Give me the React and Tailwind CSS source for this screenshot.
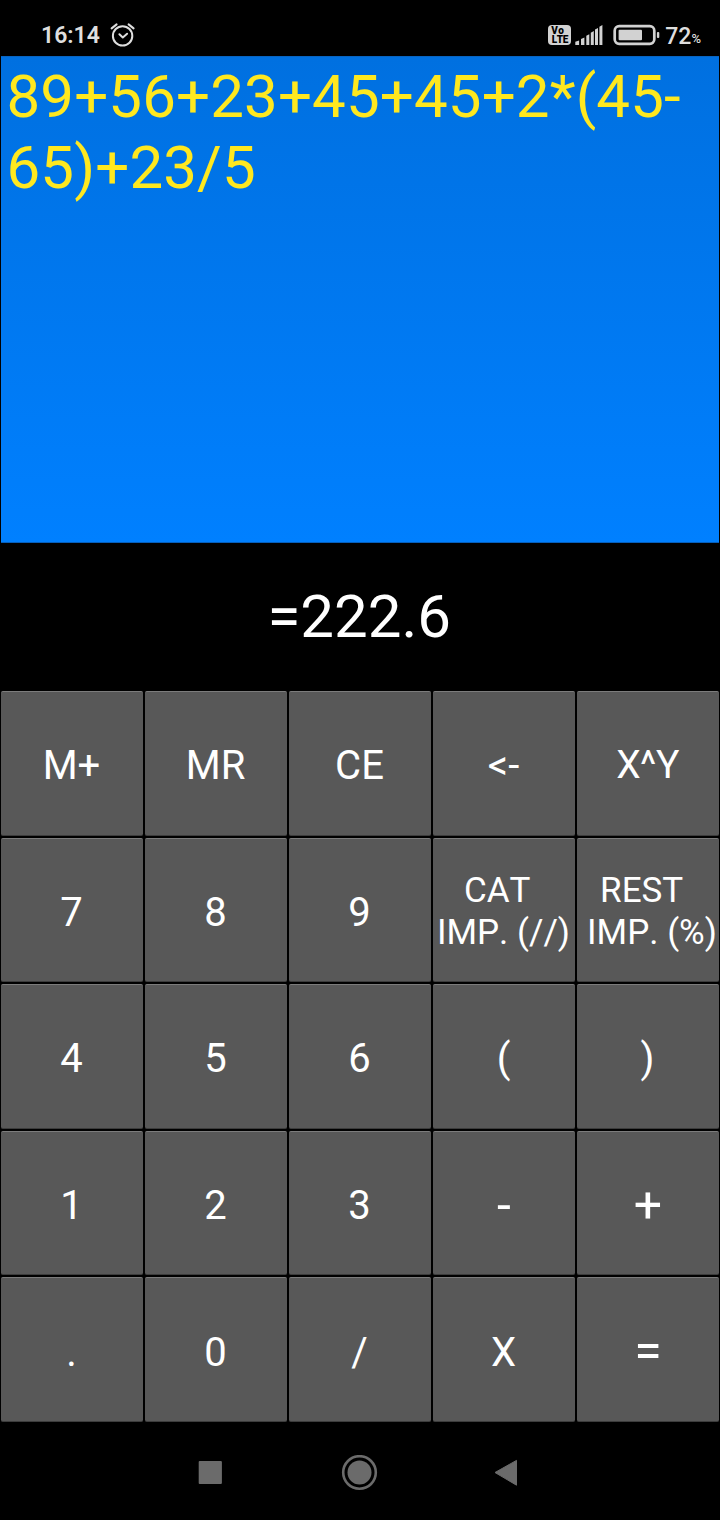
const keys = [
  ["M+"], ["MR"], ["CE"], ["<-"], ["X^Y", "text-[39px] tracking-[-0.5px] pt-1 pr-px"],
  ["7"], ["8"], ["9"], ["CAT", "cat"], ["REST", "rest"],
  ["4"], ["5"], ["6"], ["("], [")"],
  ["1"], ["2"], ["3"], ["-", "text-[50px] pt-1"], ["+", "text-[50px] pt-1"],
  ["."], ["0"], ["/"], ["X"], ["=", "text-[50px] pt-1"],
];

function StatusBar() {
  return (
    <header className="flex h-14 shrink-0 items-center pt-[14px] text-[#dedede]">
      <span className="ml-[41px] w-[69px] text-[23px] leading-none font-semibold">16:14</span>
      <svg width="26" height="26" viewBox="0 0 26 26" fill="none" stroke="#dedede" strokeWidth="2" strokeLinecap="round" strokeLinejoin="round">
        <circle cx="12.6" cy="13.9" r="9.7" />
        <path d="M9.4 12.2l3.4 3.2 4.3-3.7M1.6 6.4l5-4M23.6 6.4l-5-4" />
      </svg>
      <div className="ml-auto flex items-center pr-[19px]">
        <div className="flex h-5 w-[23px] flex-col items-center justify-center rounded-[4px] bg-[#d2d2d2] text-[10px] font-black text-black">
          <span className="h-[9px] w-[17px] leading-[9px] tracking-[0.3px]">Vo</span>
          <span className="h-[9px] leading-[9px] tracking-[-0.4px]">LTE</span>
        </div>
        <svg className="ml-1" width="28" height="20" viewBox="0 0 28 20" fill="#d2d2d2">
          <path d="M.3 20v-3.3l3.8-1.2V20zM6 20v-6l3.4-1.6V20zM11.3 20V10.8l3-1.6V20zM15.8 20V7.8l3-1.7V20zM20 20V4.6l3-1.6V20zM24.4 20V1.7l3-1.7v20z" />
        </svg>
        <svg className="ml-[10px]" width="47" height="22" viewBox="0 0 47 22" fill="none">
          <rect x="1.7" y="2.2" width="39.6" height="17.6" rx="4.5" stroke="#d2d2d2" strokeWidth="2.7" />
          <rect x="5.6" y="5.7" width="23.4" height="10.6" rx="1" fill="#d2d2d2" />
          <rect x="43.9" y="8" width="2.4" height="6" rx="1" fill="#d2d2d2" />
        </svg>
        <span className="mt-0.5 ml-[5px] text-[23px] leading-none font-medium">72</span>
        <span className="mt-[6px] text-[13px] leading-none font-medium">%</span>
      </div>
    </header>
  );
}

function TwoLineLabel({ label, kind }) {
  return (
    <span className="flex flex-col text-[35px] leading-[42px] whitespace-pre">
      <span className={kind === "cat" ? "pl-[27px] text-left" : "pl-[13px] text-left"}>{label}</span>
      <span className="text-left">{kind === "cat" ? "IMP. (//)" : "IMP. (%)"}</span>
    </span>
  );
}

function Key({ label, kind }) {
  const twoLine = kind === "cat" || kind === "rest";
  const text = twoLine ? (kind === "cat" ? "pt-1 pr-px" : "pt-1 pl-[8px]") : kind || "text-[40px] pt-1.5 pr-px";
  return (
    <button className="p-px">
      <span className={"flex h-full items-center justify-center overflow-hidden rounded-[2px] border-t border-b border-t-[#7c7c7c] border-b-[#3c3c3c] bg-[#585858] " + text}>
        {twoLine ? <TwoLineLabel label={label} kind={kind} /> : label}
      </span>
    </button>
  );
}

export default function App() {
  return (
    <div className="flex h-[1520px] w-[720px] flex-col overflow-hidden bg-black font-[Roboto,sans-serif] text-white [font-kerning:none]">
      <StatusBar />
      <section className="mx-px h-[487px] shrink-0 border-t border-b border-t-[#0964c0] border-b-[#075fbb] bg-linear-to-b from-[#0070e0] to-[#0080ff] pt-1 pl-[5.5px] text-[60px] leading-[71px] tracking-[0.13px] text-[#ffe81f]">
        <p>89+56+23+45+45+2*(45-<br />65)+23/5</p>
      </section>
      <output className="flex h-[147px] shrink-0 items-center justify-center pr-[1.5px] text-[60px] leading-none">=222.6</output>
      <main className="grid h-[733px] shrink-0 grid-cols-5 grid-rows-5">
        {keys.map(([label, kind]) => <Key key={label} label={label} kind={kind} />)}
      </main>
      <nav className="flex h-[97px] items-start pt-8">
        <svg className="ml-[198px]" width="24" height="36" viewBox="0 0 24 36"><rect x=".7" y="5.9" width="23.2" height="23" rx="1" fill="#6b6b6b" /></svg>
        <svg className="ml-[119px]" width="37" height="36" viewBox="0 0 37 36"><circle cx="18.5" cy="17.5" r="16.3" fill="none" stroke="#6b6b6b" strokeWidth="2.6" /><circle cx="18.5" cy="17.5" r="12" fill="#6b6b6b" /></svg>
        <svg className="ml-[115px]" width="26" height="36" viewBox="0 0 26 36"><path d="M2 17.5L23.5 5.4v24.8z" fill="#6b6b6b" stroke="#6b6b6b" strokeWidth="1" strokeLinejoin="round" /></svg>
      </nav>
    </div>
  );
}
